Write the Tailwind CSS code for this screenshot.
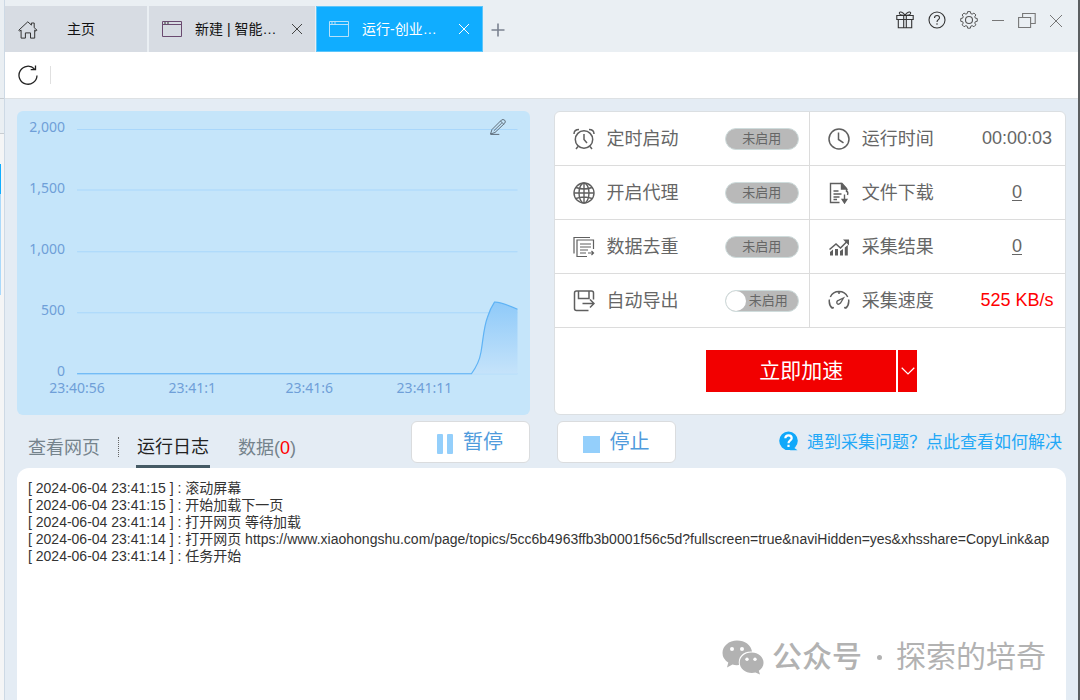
<!DOCTYPE html>
<html lang="zh-CN">
<head>
<meta charset="utf-8">
<title>运行日志</title>
<script src="https://cdn.jsdelivr.net/npm/@tailwindcss/browser@4"></script>
</head>
<body class="flex h-screen overflow-hidden bg-[#e4ecf4] font-['Liberation_Sans','Noto_Sans_CJK_SC',sans-serif] text-[#666]">

<!-- sliver of the task list -->
<aside class="flex w-[5px] shrink-0 flex-col border-r border-[#cdd9e5] bg-[#f4f5f6]">
  <div class="h-[99px] border-b border-[#c8cdd2] bg-[#eaeff3]"></div>
  <div class="h-[35px] border-b border-[#c8cdd2] bg-[#eaeff3]"></div>
  <div class="mt-[30px] h-[30px] w-px bg-[#10adff]"></div>
  <div class="h-[101px] w-px bg-[#a9d9fb]"></div>
</aside>

<div class="flex min-w-0 flex-1 flex-col border-r-2 border-[#5b5e60]">
  <header class="flex h-[52px] shrink-0 items-end bg-[#eaeff3]">
    <nav class="flex h-[46px] items-stretch gap-0.5 text-[14px] text-[#111]">
      <button class="flex w-[142px] items-center bg-[#d7dce3] pl-[13px]">
        <svg class="size-5" viewBox="0 0 20 20" fill="none" stroke="#333" stroke-width="1"><path d="M.8 11.200 9.800 2.800l3.600 3.300V4h2.800v4.700l2.800 2.500-1 1-1.300-1.100v8h-4.200v-5.200H7.400v5.200H3.100v-8l-1.400 1.100z"/></svg>
        <span class="ml-[29px]">主页</span>
      </button>
      <button class="flex w-[166px] items-center bg-[#d7dce3] pl-[13px]">
        <svg class="h-4 w-5" viewBox="0 0 20 16" fill="none" stroke="#6a4a70"><path d="M.5.5h19v15H.5zM.5 3.5h19"/><path stroke="#333" stroke-dasharray="2 1" d="M2 2h6"/></svg>
        <span class="ml-[13px] whitespace-nowrap">新建 | 智能…</span>
        <svg class="ml-auto mr-3 size-3" viewBox="0 0 12 12" fill="none" stroke="#444"><path d="m1 1 10 10M11 1 1 11"/></svg>
      </button>
      <button class="-ml-px flex w-[167px] items-center border border-[#5cc5fa] bg-[#10adff] pl-3 text-white">
        <svg class="h-4 w-5" viewBox="0 0 20 16" fill="none" stroke="#b6e1fa"><path d="M.5.5h19v15H.5zM.5 3.5h19"/><path stroke-dasharray="2 1" d="M2 2h6"/></svg>
        <span class="ml-[13px] whitespace-nowrap">运行-创业…</span>
        <svg class="ml-auto mr-3 size-3" viewBox="0 0 12 12" fill="none" stroke="#fff"><path d="m1 1 10 10M11 1 1 11"/></svg>
      </button>
      <button aria-label="新标签" class="ml-[5px] flex items-center pt-0.5">
        <svg class="size-4" viewBox="0 0 16 16" fill="none" stroke="#7b8290" stroke-width="1.600"><path d="M8 1.500v13M1.500 8h13"/></svg>
      </button>
    </nav>
    <div class="ml-auto mr-4 flex items-center gap-3.5 self-start pt-[11px]">
      <button aria-label="礼物"><svg class="size-[18px]" viewBox="0 0 18 18" fill="none" stroke="#333" stroke-width="1.100"><path d="M.8 4.500h16.400v4H.8zM2.300 8.500h13.400v8.200H2.300zM7.700 4.500v12.200M10.300 4.500v12.200M9 4.500C7 4.500 2.800 4 3.300 2 4 0 7.300 1 9 4.500zM9 4.500C11 4.500 15.200 4 14.700 2 14 0 10.700 1 9 4.500z"/></svg></button>
      <button aria-label="帮助"><svg class="size-[18px]" viewBox="0 0 18 18" fill="none" stroke="#333" stroke-width="1.100"><circle cx="9" cy="9" r="8"/><path d="M6.500 7C6.500 3.700 11.500 3.700 11.500 6.700 11.500 8.700 9 8.700 9 11M9 12.300v1.500"/></svg></button>
      <button aria-label="设置"><svg class="size-[18px]" viewBox="0 0 18 18" fill="none" stroke="#555" stroke-width="1.100" stroke-linejoin="round"><path d="M7.500.8h3l.5 2.200 1.500.6 2-1.200 2.100 2.100-1.200 2 .6 1.500 2.200.5v3l-2.200.5-.6 1.500 1.200 2-2.100 2.100-2-1.200-1.500.6-.5 2.200h-3l-.5-2.200-1.500-.6-2 1.200-2.100-2.100 1.200-2-.6-1.500-2.200-.5v-3l2.200-.5.6-1.500-1.200-2 2.100-2.100 2 1.200 1.500-.6z" transform="translate(.9 -.1) scale(.9)"/><circle cx="9" cy="9" r="3.500"/></svg></button>
      <button aria-label="最小化"><svg class="h-[18px] w-3" viewBox="0 0 12 18" stroke="#777"><path d="M0 9.500h12"/></svg></button>
      <button aria-label="还原"><svg class="size-[18px]" viewBox="0 0 18 18" fill="none" stroke="#777" stroke-width="1.100"><path d="M.6 6.500h12v10H.6zM4.600 6.500v-4h12.600v10h-4.600"/></svg></button>
      <button aria-label="关闭"><svg class="h-[18px] w-3" viewBox="0 0 12 18" fill="none" stroke="#777"><path d="m0 4 12 12M12 4 0 16"/></svg></button>
    </div>
  </header>

  <div class="flex h-[47px] shrink-0 items-center border-b border-[#dde1e4] bg-white pl-[13px]">
    <button aria-label="刷新"><svg class="size-5" viewBox="0 0 20 20" fill="none" stroke="#222" stroke-width="1.300"><path d="M16.500 4A9 9 0 1 0 19 10.500"/><path d="M12.700 4.600h4.800V.6"/></svg></button>
    <span class="ml-3 h-[18px] w-px bg-[#e0e0e0]"></span>
  </div>

  <main class="flex min-h-0 flex-1 flex-col px-3 pt-3">
    <div class="grid grid-cols-2 gap-6">
      <section class="relative rounded-md bg-[#c5e5fa]">
        <svg class="w-full" viewBox="0 0 512 304" font-family="'Noto Sans',sans-serif" font-size="14" fill="#6f9fd8">
          <defs><linearGradient id="area" x1="0" y1="0" x2="0" y2="1"><stop offset="0" stop-color="#8fcaf9"/><stop offset="1" stop-color="#c5e3fa"/></linearGradient></defs>
          <path d="M60 18.500h440M60 79h440M60 140.500h440M60 201.500h440M60 262.500h440" stroke="#a9d7fb"/>
          <path d="M454 262.500C458 257 462 250 463.500 241 466 227 466 217 470 206 472 200 475 194 477 191 483 190.500 491 194 500 198V262.500z" fill="url(#area)"/>
          <path d="M60 262.500H454C458 257 462 250 463.500 241 466 227 466 217 470 206 472 200 475 194 477 191 483 190.500 491 194 500 198" fill="none" stroke="#5fb3f5" stroke-width="1.200"/>
          <g text-anchor="end"><text x="48" y="21">2,000</text><text x="48" y="82">1,500</text><text x="48" y="143">1,000</text><text x="48" y="204">500</text><text x="48" y="265">0</text></g>
          <g text-anchor="middle"><text x="60" y="282">23:40:56</text><text x="175" y="282">23:41:1</text><text x="292" y="282">23:41:6</text><text x="407" y="282">23:41:11</text></g>
        </svg>
        <button aria-label="编辑" class="absolute right-6 top-2"><svg class="size-4" viewBox="0 0 16 16" fill="none" stroke="#5e6c78"><path d="M.5 15 2 10.500 11.500 1Q13-.1 14.800 1.300 16 3 14.600 4.300L5 13.500zM10.500 2l3.300 3.300M3.800 11.800l8-7.800M.5 15.400h8.800"/></svg></button>
      </section>

      <section class="flex flex-col rounded-md border border-[#dbdfe2] bg-white text-[18px]">
        <div class="grid grid-cols-2 [&>div]:flex [&>div]:h-[54px] [&>div]:items-center [&>div]:border-b [&>div]:border-[#dcdcdc] [&>div:nth-child(odd)]:border-r">
          <div class="pl-[18px] pr-2.5">
            <svg class="size-[22px]" viewBox="0 0 22 22" fill="none" stroke="#5f5f5f" stroke-width="1.500"><circle cx="11" cy="11.500" r="8.700"/><path d="M11 6v5.500l3 3.500M1 6C1 3 3 1.500 6 1.500M21 6c0-3-2-4.500-5-4.500M5 18.500 3 21M17 18.500l2 2.500"/></svg>
            <span class="ml-3 pt-0.5">定时启动</span>
            <button role="switch" aria-checked="false" aria-label="定时启动" class="ml-auto h-[22px] w-[74px] rounded-full border border-[#cfdcdc] bg-[#b9b9b9] text-[13px] leading-5">未启用</button>
          </div>
          <div class="pl-[18px]">
            <svg class="size-[22px]" viewBox="0 0 22 22" fill="none" stroke="#5f5f5f" stroke-width="1.500"><circle cx="11" cy="11" r="10"/><path d="M10.500 4.500v7l5 3.300"/></svg>
            <span class="ml-3 pt-0.5">运行时间</span><span class="ml-auto w-24 text-center">00:00:03</span>
          </div>
          <div class="pl-[18px] pr-2.5">
            <svg class="size-[22px]" viewBox="0 0 22 22" fill="none" stroke="#5f5f5f" stroke-width="1.400"><circle cx="11" cy="11" r="10"/><ellipse cx="11" cy="11" rx="5" ry="10"/><path d="M11 1v20M1 11h20M3 5.500q8 3 16 0M3 16.500q8-3 16 0"/></svg>
            <span class="ml-3 pt-0.5">开启代理</span>
            <button role="switch" aria-checked="false" aria-label="开启代理" class="ml-auto h-[22px] w-[74px] rounded-full border border-[#cfdcdc] bg-[#b9b9b9] text-[13px] leading-5">未启用</button>
          </div>
          <div class="pl-[18px]">
            <svg class="size-[22px]" viewBox="0 0 22 22" fill="none" stroke="#5f5f5f" stroke-width="1.400"><path d="M11.500 20.500H2.500v-19H14l4.500 5V10"/><path fill="#5f5f5f" d="M13.500 2v5h5zM14.200 17.500h4.600L16.500 21z"/><path d="M16.500 12.500V18M5.500 9h5M5.500 12h8M5.500 15h6M5.500 17.500h3.500M18.500 9q2 1 1 4"/></svg>
            <span class="ml-3 pt-0.5">文件下载</span><span class="ml-auto w-24 text-center"><a href="#" class="underline underline-offset-2">0</a></span>
          </div>
          <div class="pl-[18px] pr-2.5">
            <svg class="size-[22px]" viewBox="0 0 22 22" fill="none" stroke="#5f5f5f" stroke-width="1.200"><path d="M1 17.500V1.500h16M14 20.500H4V4h16.500v9M7 8h11M7 11h11M7 14h8M7 17h6M15 17h5.500M18.500 15l2 2-2 2"/></svg>
            <span class="ml-3 pt-0.5">数据去重</span>
            <button role="switch" aria-checked="false" aria-label="数据去重" class="ml-auto h-[22px] w-[74px] rounded-full border border-[#cfdcdc] bg-[#b9b9b9] text-[13px] leading-5">未启用</button>
          </div>
          <div class="pl-[18px]">
            <svg class="size-[22px]" viewBox="0 0 22 22" fill="#5f5f5f"><path d="M2 16l3-2.500v6H2zM7 13h3v6.500H7zM12 15l3-2v6.500h-3zM16.800 11.500l3-2.500v10.500h-3z"/><path fill="none" stroke="#5f5f5f" stroke-width="1.600" d="M1.500 13.500 8 8l4.500 4L19 5.500"/><path d="M15 3.500h6v6z"/></svg>
            <span class="ml-3 pt-0.5">采集结果</span><span class="ml-auto w-24 text-center"><a href="#" class="underline underline-offset-2">0</a></span>
          </div>
          <div class="pl-[18px] pr-2.5">
            <svg class="size-[22px]" viewBox="0 0 22 22" fill="none" stroke="#5f5f5f" stroke-width="1.500"><path d="M20.500 9.500V3q0-2-2-2h-15Q1.500 1 1.500 3v15.500q0 2 2 2H15.500M5.500 1v7.500h10.500V1M9.500 13.500h11M17 9.500l4 4-4 4"/></svg>
            <span class="ml-3 pt-0.5">自动导出</span>
            <button role="switch" aria-checked="false" aria-label="自动导出" class="ml-auto flex h-[22px] w-[74px] items-center rounded-full border border-[#cfdcdc] bg-[#b9b9b9] text-[13px] leading-5"><span class="mr-[3px] size-5 rounded-full bg-white"></span>未启用</button>
          </div>
          <div class="pl-[18px]">
            <svg class="size-[22px]" viewBox="0 0 22 22" fill="none" stroke="#5f5f5f" stroke-width="1.500"><path d="M4.500 18.500A10 10 0 0 1 1.400 9.500M2.300 7A9.700 9.700 0 0 1 19.700 7M20.600 9.500A10 10 0 0 1 17.500 18.500M11 1.500v2.500M4.500 18.500l1-1.500M17.500 18.500l-1-1.500"/><path stroke-width="1.300" d="M15.500 8 12.500 13Q10 15.500 8.800 13 8.500 11 11 10.200z"/></svg>
            <span class="ml-3 pt-0.5">采集速度</span><span class="ml-auto w-24 text-center text-[#f00]">525 KB/s</span>
          </div>
        </div>
        <div class="flex flex-1 items-center justify-center gap-0.5 pl-1 text-white">
          <button class="h-[42px] w-[190px] bg-[#f20000] text-[21px]">立即加速</button>
          <button aria-label="更多" class="flex h-[42px] w-[19px] items-center justify-center bg-[#f20000]"><svg class="h-2 w-[14px]" viewBox="0 0 14 8" fill="none" stroke="#fff" stroke-width="1.200"><path d="m.7.8 6.300 6.200L13.300.8"/></svg></button>
        </div>
      </section>
    </div>

    <div class="grid h-[53px] shrink-0 grid-cols-2 gap-6 text-[18px]">
      <div class="flex items-start pt-1.5">
        <button class="ml-[11px] h-[47px] pt-1.5 leading-10 text-[#75838c]"><span class="block">查看网页</span></button>
        <span class="ml-[18px] mt-4 h-5 border-l border-dotted border-[#666]"></span>
        <button class="ml-[17px] h-[47px] border-b-[3px] border-[#455a64] px-px pt-1.5 leading-10 text-[#222]"><span class="block">运行日志</span></button>
        <button class="ml-7 h-[47px] pt-1.5 leading-10 text-[#75838c]"><span class="block">数据(<span class="text-[#f00]">0</span>)</span></button>
        <button class="ml-auto flex h-[42px] w-[119px] items-center justify-center gap-2.5 rounded-md border border-[#dadcde] bg-white text-[20px] text-[#4f9bdc]">
          <svg class="mt-1 h-5 w-4" viewBox="0 0 16 20" fill="#94cffb"><rect width="6" height="20" rx="1"/><rect x="10" width="6" height="20" rx="1"/></svg>暂停</button>
      </div>
      <div class="flex items-start pt-1.5">
        <button class="ml-[3px] flex h-[42px] w-[119px] items-center justify-center gap-2.5 rounded-md border border-[#dadcde] bg-white text-[20px] text-[#4f9bdc]">
          <span class="mt-1 h-[17px] w-[17px] bg-[#94cffb]"></span>停止</button>
        <a href="#" class="ml-auto mr-1 flex h-10 items-center gap-2 whitespace-nowrap text-[17px] text-[#23a8f7]">
          <svg class="size-5" viewBox="0 0 20 20"><path fill="#10a8fa" d="M9.500.5a9.300 9.300 0 1 1 0 18.600 9.300 9.300 0 0 1 0-18.600zM14 16l4.500 3.300H11z"/><path fill="none" stroke="#fff" stroke-width="2.200" d="M6.300 7.300C6.500 3.500 12.700 3.500 12.700 7.300 12.700 9.500 9.500 9.500 9.500 12.300M9.500 13.800v2.200"/></svg>
          <span class="pt-0.5">遇到采集问题？点此查看如何解决</span></a>
      </div>
    </div>

    <section class="relative min-h-0 flex-1 overflow-hidden rounded-t-xl bg-white pl-[11px] pt-3 text-[14px] leading-[17px] text-[#333]">
      <ol class="whitespace-nowrap">
        <li>[ 2024-06-04 23:41:15 ] : 滚动屏幕</li>
        <li>[ 2024-06-04 23:41:15 ] : 开始加载下一页</li>
        <li>[ 2024-06-04 23:41:14 ] : 打开网页 等待加载</li>
        <li>[ 2024-06-04 23:41:14 ] : 打开网页 https://www.xiaohongshu.com/page/topics/5cc6b4963ffb3b0001f56c5d?fullscreen=true&amp;naviHidden=yes&amp;xhsshare=CopyLink&amp;ap</li>
        <li>[ 2024-06-04 23:41:14 ] : 任务开始</li>
      </ol>
      <div class="absolute bottom-[21px] right-5 flex items-center whitespace-nowrap text-[30px] leading-[44px] text-[#b2b2b2]">
        <svg class="mr-2 h-[35px] w-[42px]" viewBox="0 0 42 35" fill="#b2b2b2"><path d="M15 .5C23 .5 29 5 30 11.500 21 11 15.500 17 17 25Q13.500 25.500 10.500 24.500L5 27.500 6.300 22.500Q.5 19 .5 13C.5 6 7 .5 15 .5z"/><path d="M29.500 12.500c7 0 12 4.500 12 10.200 0 3.500-2 6.300-4.700 8.100L38 34.500 33.500 32.500c-8 2-15.800-3-15.800-9.800 0-5.700 5-10.200 11.800-10.200z"/><g fill="#fff"><circle cx="10" cy="9" r="2"/><circle cx="20" cy="9" r="2"/><circle cx="25" cy="19.300" r="1.700"/><circle cx="33" cy="19.300" r="1.700"/></g></svg>
        <span class="font-medium">公众号</span><span class="flex w-[34px] justify-center"><span class="size-[5px] rounded-full bg-[#b2b2b2]"></span></span><span>探索的培奇</span>
      </div>
    </section>
  </main>
</div>
</body>
</html>
